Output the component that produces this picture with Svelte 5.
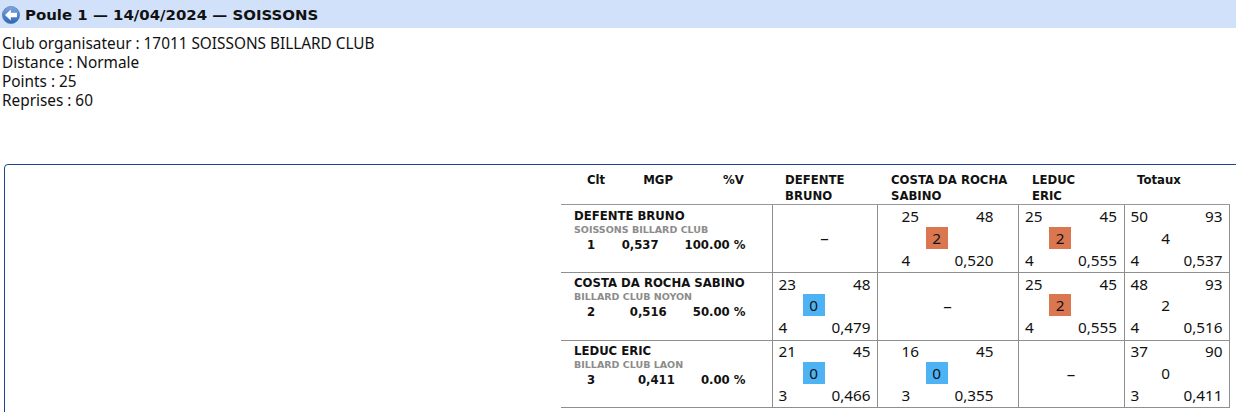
<script>
  const rows = [
    { name: 'DEFENTE BRUNO', club: 'SOISSONS BILLARD CLUB', rank: 1, mgp: '0,537', pct: '100.00 %',
      cells: [null, ['25','48','2','4','0,520'], ['25','45','2','4','0,555'], ['50','93','4','4','0,537']], h: 'r1' },
    { name: 'COSTA DA ROCHA SABINO', club: 'BILLARD CLUB NOYON', rank: 2, mgp: '0,516', pct: '50.00 %',
      cells: [['23','48','0','4','0,479'], null, ['25','45','2','4','0,555'], ['48','93','2','4','0,516']], h: 'r2' },
    { name: 'LEDUC ERIC', club: 'BILLARD CLUB LAON', rank: 3, mgp: '0,411', pct: '0.00 %',
      cells: [['21','45','0','3','0,466'], ['16','45','0','3','0,355'], null, ['37','90','0','3','0,411']], h: 'r3' }
  ];
</script>

<div class="page">
  <header class="title">
    <svg class="back" width="18" height="18" viewBox="0 0 18 18" aria-hidden="true">
      <defs>
        <linearGradient id="g" x1="0" y1="0" x2="0" y2="1">
          <stop offset="0" stop-color="#7fa6dc" />
          <stop offset="1" stop-color="#2f66b4" />
        </linearGradient>
      </defs>
      <circle cx="9" cy="9" r="8.6" fill="url(#g)" stroke="#3a6cb4" stroke-width="0.6" />
      <path d="M3 9 L8.8 3.6 L8.8 6.8 L15 6.8 L15 11.2 L8.8 11.2 L8.8 14.4 Z" fill="#fff" />
    </svg>
    <h1>Poule 1 — 14/04/2024 — SOISSONS</h1>
  </header>

  <div class="info">
    <div>Club organisateur : 17011 SOISSONS BILLARD CLUB</div>
    <div>Distance : Normale</div>
    <div>Points : 25</div>
    <div>Reprises : 60</div>
  </div>

  <section class="box">
    <table>
      <colgroup>
        <col class="c0" /><col class="c1" /><col class="c2" /><col class="c3" /><col class="c4" />
      </colgroup>
      <thead>
        <tr>
          <th class="stats-head"><span class="h-clt">Clt</span><span class="h-mgp">MGP</span><span class="h-v">%V</span></th>
          <th class="p">DEFENTE<br />BRUNO</th>
          <th class="p2">COSTA DA ROCHA<br />SABINO</th>
          <th class="p3">LEDUC<br />ERIC</th>
          <th class="tot">Totaux</th>
        </tr>
      </thead>
      <tbody>
        {#each rows as row}
          <tr class={row.h}>
            <td class="who">
              <div class="name">{row.name}</div>
              <div class="club">{row.club}</div>
              <div class="line">
                <span class="rank">{row.rank}</span>
                <span class="mgp">{row.mgp}</span>
                <span class="pct">{row.pct}</span>
              </div>
            </td>
            {#each row.cells as c, i}
              <td class="score">
                {#if c}
                  <div class="inner">
                    <span class="tl">{c[0]}</span>
                    <span class="tr">{c[1]}</span>
                    <span class="mid" class:win={i < 3 && c[2] === '2'} class:lose={i < 3 && c[2] === '0'}>{c[2]}</span>
                    <span class="bl">{c[3]}</span>
                    <span class="br">{c[4]}</span>
                  </div>
                {:else}
                  <div class="dash">–</div>
                {/if}
              </td>
            {/each}
          </tr>
        {/each}
      </tbody>
    </table>
  </section>
</div>

<style>
  :global(body) {
    margin: 0;
    background: #fff;
  }
  .page {
    width: 1236px;
    height: 412px;
    overflow: hidden;
    font-family: "Noto Sans", sans-serif;
    color: #111;
  }
  .title {
    height: 28px;
    box-sizing: border-box;
    background: #d2e1fa;
    display: flex;
    align-items: center;
    padding: 2px 0 0 2px;
    gap: 5px;
  }
  .back {
    flex: none;
  }
  h1 {
    margin: 0;
    font-family: "DejaVu Sans", sans-serif;
    font-size: 14.95px;
    font-weight: 700;
    color: #111;
    white-space: nowrap;
  }
  .info {
    padding: 6px 0 0 2px;
    font-size: 15.35px;
    line-height: 19px;
    height: 130px;
    box-sizing: border-box;
    white-space: nowrap;
  }
  .box {
    margin: 6px 0 0 4px;
    width: 1250px;
    height: 300px;
    box-sizing: border-box;
    border: 1px solid #1f4390;
    border-top-left-radius: 4px;
    padding-left: 556px;
  }
  table {
    border-collapse: collapse;
    table-layout: fixed;
    width: 668px;
  }
  .c0 { width: 211px; }
  .c1 { width: 105px; }
  .c2 { width: 141px; }
  .c3 { width: 106px; }
  .c4 { width: 105px; }
  th {
    font-family: "DejaVu Sans", sans-serif;
    font-size: 11.7px;
    line-height: 16px;
    font-weight: 700;
    text-align: left;
    vertical-align: top;
    height: 39px;
    padding: 7px 0 0;
    box-sizing: border-box;
    border-bottom: 1px solid #999;
    white-space: nowrap;
  }
  .h-clt { margin-left: 26px; }
  .h-mgp { margin-left: 38px; }
  .h-v { margin-left: 50px; }
  .p { padding-left: 13px; }
  .p2 { padding-left: 14px; }
  .p3 { padding-left: 14px; }
  .tot { padding-left: 13px; }
  td {
    border: 1px solid #8f8f8f;
    padding: 0;
    vertical-align: top;
    box-sizing: border-box;
    overflow: hidden;
  }
  td.who {
    border-left: none;
    padding: 2px 26px 0 13px;
    font-family: "DejaVu Sans", sans-serif;
    font-weight: 700;
    font-size: 11.7px;
    white-space: nowrap;
  }
  .r1 td { height: 68px; }
  .r1 td.who { padding-top: 3px; }
  .r2 td { height: 68px; }
  .r3 td { height: 67px; }
  .name { line-height: 16px; }
  .club {
    font-size: 9.5px;
    line-height: 11px;
    color: #8c8c8c;
    margin-bottom: 2px;
  }
  .line {
    display: flex;
    gap: 26px;
    line-height: 17px;
  }
  .rank {
    margin: 0 auto 0 13px;
  }
  .inner {
    width: 92px;
    margin: 0 auto;
    display: grid;
    grid-template-columns: 24px 22px 46px;
    grid-template-rows: 22px 22px 22px;
    font-size: 15.3px;
    line-height: 22px;
  }
  .r2 .inner { grid-template-rows: 21px 22px 22px; }
  .r3 .inner { margin-top: -1px; }
  .tl { grid-area: 1 / 1 / 2 / 2; white-space: nowrap; }
  .tr { grid-area: 1 / 2 / 2 / 4; text-align: right; }
  .mid { grid-area: 2 / 2 / 3 / 3; text-align: center; }
  .bl { grid-area: 3 / 1 / 4 / 2; }
  .br { grid-area: 3 / 2 / 4 / 4; text-align: right; }
  .win { background: #db7750; }
  .lose { background: #4db3f5; }
  .dash {
    text-align: center;
    font-size: 17px;
    line-height: 66px;
  }
</style>
